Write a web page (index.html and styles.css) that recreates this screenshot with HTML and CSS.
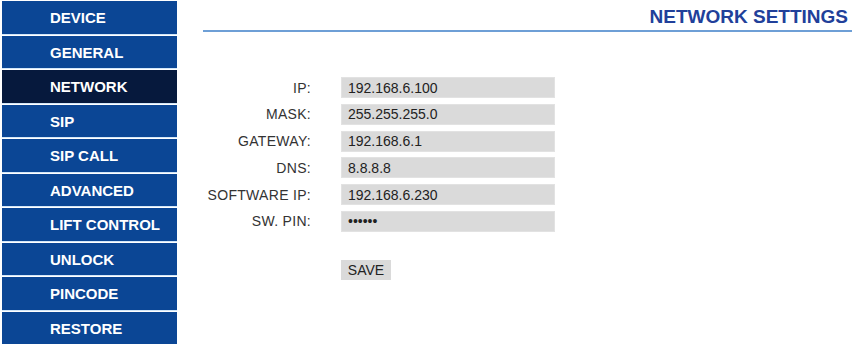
FILE: index.html
```html
<!DOCTYPE html>
<html lang="en">
<head>
    <meta charset="UTF-8">
    <title>Network Settings</title>
    <link rel="stylesheet" href="styles.css">
</head>
<body>
    <div class="page">
        <div class="menu">
            <a class="menu-item" href="#">DEVICE</a>
            <a class="menu-item" href="#">GENERAL</a>
            <a class="menu-item active" href="#">NETWORK</a>
            <a class="menu-item" href="#">SIP</a>
            <a class="menu-item" href="#">SIP CALL</a>
            <a class="menu-item" href="#">ADVANCED</a>
            <a class="menu-item" href="#">LIFT CONTROL</a>
            <a class="menu-item" href="#">UNLOCK</a>
            <a class="menu-item" href="#">PINCODE</a>
            <a class="menu-item" href="#">RESTORE</a>
        </div>

        <div class="content">
            <div class="page-title">NETWORK SETTINGS</div>

            <form class="settings-form" onsubmit="return false;">
                <label class="field-label" for="ip">IP:</label>
                <input class="field-input" type="text" id="ip" value="192.168.6.100">

                <label class="field-label" for="mask">MASK:</label>
                <input class="field-input" type="text" id="mask" value="255.255.255.0">

                <label class="field-label" for="gateway">GATEWAY:</label>
                <input class="field-input" type="text" id="gateway" value="192.168.6.1">

                <label class="field-label" for="dns">DNS:</label>
                <input class="field-input" type="text" id="dns" value="8.8.8.8">

                <label class="field-label" for="swip">SOFTWARE IP:</label>
                <input class="field-input" type="text" id="swip" value="192.168.6.230">

                <label class="field-label" for="swpin">SW. PIN:</label>
                <input class="field-input" type="password" id="swpin" value="123456">

                <button class="save-btn" type="submit">SAVE</button>
            </form>
        </div>
    </div>
</body>
</html>
```

FILE: styles.css
```css
body {
    margin: 0;
    font-family: "Liberation Sans", Arial, sans-serif;
    background: #fff;
}
.page {
    display: flex;
    align-items: flex-start;
}
.menu {
    width: 175px;
    margin: 1px 0 0 2px;
    display: flex;
    flex-direction: column;
    gap: 2px;
}
.menu-item {
    height: 32.5px;
    line-height: 33px;
    padding-left: 48px;
    background-color: #0b4695;
    color: #fff;
    font-size: 15px;
    font-weight: bold;
    text-decoration: none;
    box-shadow: 0 1px 0 #d2e6f8;
}
.menu-item.active {
    background-color: #06193d;
}
.content {
    flex: 1;
    padding-left: 26px;
}
.page-title {
    padding: 7px 4px 3px 0;
    line-height: 20px;
    text-align: right;
    font-size: 19px;
    font-weight: bold;
    color: #21409a;
    border-bottom: 2px solid #6e9fd6;
}
.settings-form {
    margin-top: 45px;
    display: grid;
    grid-template-columns: 108px 214px;
    column-gap: 30px;
    row-gap: 5.8px;
    align-items: center;
}
.field-label {
    text-align: right;
    font-size: 14px;
    letter-spacing: 0.3px;
    color: #333;
}
.field-input {
    box-sizing: border-box;
    height: 21px;
    width: 214px;
    margin: 0;
    padding: 0 6px;
    border: 1px solid #e2e2e2;
    background-color: #dadada;
    font-family: "Liberation Sans", Arial, sans-serif;
    font-size: 14px;
    color: #222;
    outline: none;
}
.save-btn {
    grid-column: 2;
    justify-self: start;
    margin-top: 22px;
    width: 50px;
    height: 20px;
    padding: 0;
    border: none;
    background-color: #dadada;
    font-family: "Liberation Sans", Arial, sans-serif;
    font-size: 14px;
    color: #222;
}
```
